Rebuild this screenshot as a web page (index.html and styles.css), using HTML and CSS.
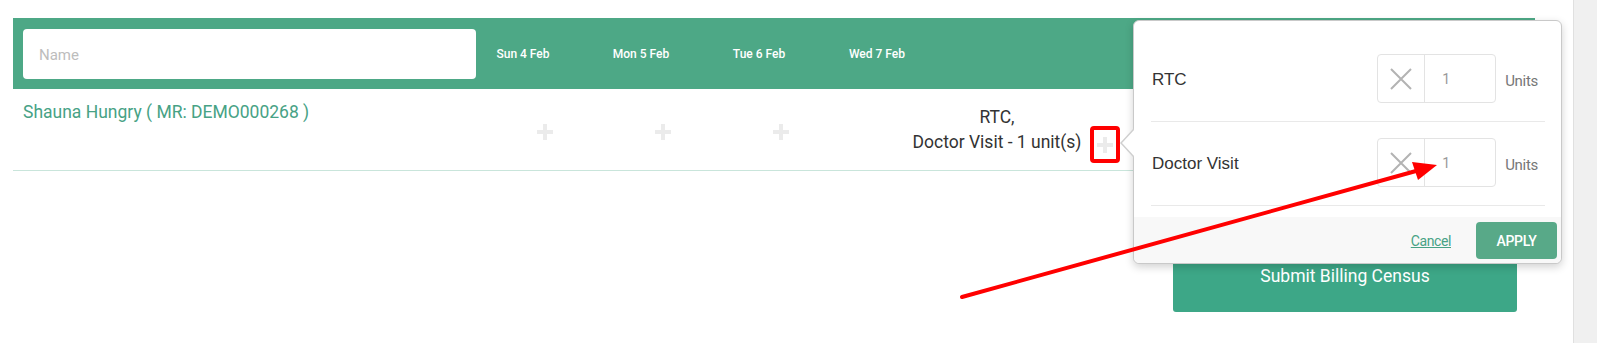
FILE: index.html
```html
<!DOCTYPE html>
<html lang="en">
<head>
  <meta charset="UTF-8" />
  <meta name="viewport" content="width=device-width, initial-scale=1.0"/>
  <title>Billing Census</title>
  <link rel="stylesheet" href="styles.css">
</head>
<body>
  <div class="screen">
    <main class="page">

      <div class="census">
        <div class="census-head">
          <div class="name-col">
            <input type="text" class="name-input" placeholder="Name" />
          </div>
          <div class="day-head">Sun 4 Feb</div>
          <div class="day-head">Mon 5 Feb</div>
          <div class="day-head">Tue 6 Feb</div>
          <div class="day-head">Wed 7 Feb</div>
        </div>

        <div class="census-row">
          <div class="name-col patient">Shauna Hungry ( MR: DEMO000268 )</div>
          <div class="day-cell"><span class="plus"></span></div>
          <div class="day-cell"><span class="plus"></span></div>
          <div class="day-cell"><span class="plus"></span></div>
          <div class="day-cell filled">
            <div class="charges">RTC,<br>Doctor Visit - 1 unit(s)</div>
            <span class="plus"></span>
          </div>
        </div>
      </div>

      <div class="actions">
        <button class="submit">Submit Billing Census</button>
      </div>

      <!-- charges popover, opened from the Wed 7 Feb cell -->
      <div class="popover">
        <div class="charge-row">
          <span class="charge-label">RTC</span>
          <div class="units-group">
            <span class="units-clear">
              <svg width="22" height="22" viewBox="0 0 22 22"><path d="M1 1 L21 21 M21 1 L1 21" stroke="#b3b3b3" stroke-width="2" fill="none"/></svg>
            </span>
            <span class="units-value">1</span>
          </div>
          <span class="units-text">Units</span>
        </div>
        <div class="charge-row">
          <span class="charge-label">Doctor Visit</span>
          <div class="units-group">
            <span class="units-clear">
              <svg width="22" height="22" viewBox="0 0 22 22"><path d="M1 1 L21 21 M21 1 L1 21" stroke="#b3b3b3" stroke-width="2" fill="none"/></svg>
            </span>
            <span class="units-value">1</span>
          </div>
          <span class="units-text">Units</span>
        </div>
        <div class="popover-foot">
          <a class="cancel" href="#">Cancel</a>
          <button class="apply">APPLY</button>
        </div>
      </div>

      <!-- red annotation drawn over the screenshot -->
      <svg class="annotation" width="1573" height="343" viewBox="0 0 1573 343">
        <rect x="1092" y="128" width="26" height="33" rx="2" fill="none" stroke="#ff0000" stroke-width="4"/>
        <line x1="962" y1="297" x2="1416" y2="171" stroke="#ff0000" stroke-width="4" stroke-linecap="round"/>
        <polygon points="1437,165 1418,180 1412,162" fill="#ff0000"/>
      </svg>

    </main>
    <div class="scrollbar"></div>
  </div>
</body>
</html>
```

FILE: styles.css
```css
body {
  margin: 0;
  font-family: Roboto, "Liberation Sans", sans-serif;
  background-color: #fff;
  color: #333;
}

.screen {
  display: flex;
  height: 343px;
  overflow: hidden;
}

.page {
  flex: 1;
  position: relative;
  padding: 18px 38px 0 13px;
}

.scrollbar {
  width: 23px;
  background-color: #f0f0f0;
  border-left: 1px solid #e0e0e0;
}

/* census table */

.census-head {
  display: flex;
  height: 71px;
  background-color: #4da886;
}

.name-col {
  width: 473px;
  box-sizing: border-box;
  flex-shrink: 0;
}

.census-head .name-col {
  padding: 11px 10px 10px;
}

.name-input {
  width: 453px;
  height: 50px;
  box-sizing: border-box;
  border: none;
  border-radius: 4px;
  padding: 2px 16px 0;
  font-family: Roboto, sans-serif;
  font-size: 15px;
  outline: none;
}

.name-input::placeholder {
  color: #bdbdbd;
}

.day-head {
  width: 118px;
  padding-right: 44px;
  box-sizing: border-box;
  text-align: center;
  align-self: center;
  color: #fff;
  font-size: 12px;
  font-weight: 500;
}

.census-row {
  display: flex;
  height: 81px;
  border-bottom: 1px solid #c9e5db;
}

.patient {
  padding: 11px 10px;
  color: #47a285;
  font-size: 17.5px;
  line-height: 24px;
}

.day-cell {
  width: 118px;
  display: flex;
  justify-content: center;
  align-items: center;
  padding-top: 5px;
  box-sizing: border-box;
}

.day-cell.filled {
  width: auto;
  justify-content: flex-start;
  align-items: flex-end;
  padding: 15px 0 0 62px;
  box-sizing: border-box;
  height: 66px;
}

.charges {
  width: 190px;
  text-align: center;
  font-size: 17.5px;
  line-height: 25px;
  color: #333;
}

.plus {
  display: inline-block;
  width: 16px;
  height: 16px;
  background:
    linear-gradient(#ebebeb, #ebebeb) center / 4px 16px no-repeat,
    linear-gradient(#ebebeb, #ebebeb) center / 16px 4px no-repeat;
}

.filled .plus {
  margin: 0 0 2px 5px;
}

.actions {
  display: flex;
  justify-content: flex-end;
  margin: 69px 18px 0 0;
}

.submit {
  width: 344px;
  height: 72px;
  border: none;
  border-radius: 3px;
  background-color: #3da787;
  color: #fff;
  font-family: Roboto, sans-serif;
  font-size: 17.5px;
}

/* popover */

.popover {
  position: absolute;
  left: 1133px;
  top: 20px;
  width: 429px;
  height: 244px;
  box-sizing: border-box;
  padding-top: 17px;
  background-color: #fff;
  border: 1px solid #c9c9c9;
  border-radius: 6px;
  box-shadow: 0 3px 9px rgba(0, 0, 0, 0.18);
  display: flex;
  flex-direction: column;
}

.popover::before,
.popover::after {
  content: "";
  position: absolute;
  top: 107px;
  border-style: solid;
  border-color: transparent;
}

.popover::before {
  left: -14px;
  border-width: 15px 14px 15px 0;
  border-right-color: #cfcfcf;
}

.popover::after {
  left: -12px;
  top: 108px;
  border-width: 14px 13px 14px 0;
  border-right-color: #fff;
}

.charge-row {
  display: flex;
  align-items: center;
  margin: 0 16px 0 17px;
  padding: 16px 0 18px 1px;
  border-bottom: 1px solid #e9e9e9;
}

.charge-label {
  flex: 1;
  padding-top: 3px;
  font-family: "Liberation Sans", Arial, sans-serif;
  font-size: 17px;
  color: #333;
}

.units-group {
  display: flex;
  height: 49px;
  box-sizing: border-box;
  border: 1px solid #e3e3e3;
  border-radius: 4px;
}

.units-clear {
  width: 46px;
  display: flex;
  align-items: center;
  justify-content: center;
  border-right: 1px solid #e3e3e3;
}

.units-value {
  width: 70px;
  box-sizing: border-box;
  padding-left: 17px;
  display: flex;
  align-items: center;
  font-size: 14px;
  color: #999;
}

.units-text {
  margin-left: 9px;
  padding-right: 7px;
  padding-top: 4px;
  font-size: 15px;
  letter-spacing: -0.3px;
  color: #777;
}

.popover-foot {
  margin-top: 11px;
  height: 46px;
  display: flex;
  justify-content: flex-end;
  align-items: center;
  padding: 1px 4px 0 0;
  box-sizing: border-box;
  background-color: #f8f8f8;
  border-radius: 0 0 6px 6px;
}

.cancel {
  margin-right: 25px;
  color: #47a285;
  font-size: 14px;
  letter-spacing: -0.4px;
}

.apply {
  width: 81px;
  height: 37px;
  border: none;
  border-radius: 4px;
  background-color: #58a988;
  color: #fff;
  font-family: Roboto, sans-serif;
  font-size: 14px;
  font-weight: 500;
  letter-spacing: -0.3px;
}

.annotation {
  position: absolute;
  left: 0;
  top: 0;
  pointer-events: none;
}
```
